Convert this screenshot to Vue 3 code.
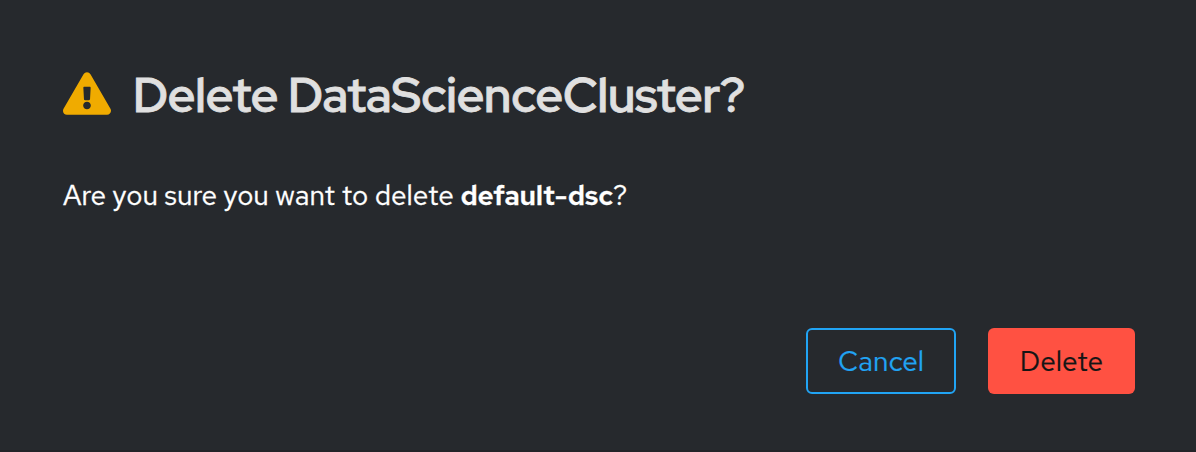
<script setup>
const title = 'Delete DataScienceCluster?'
const resource = 'default-dsc'
</script>

<template>
  <section class="modal" role="dialog" aria-labelledby="modal-title">
    <header class="header">
      <svg class="warning" viewBox="0 0 576 512" aria-hidden="true">
        <path fill="currentColor" d="M569.5 440C588 472 564.8 512 527.900 512H48.100C11.100 512-12 472 6.500 440L246.400 24C264.900-8 311.100-8 329.600 24L569.500 440zM288 354c-25.400 0-46 20.600-46 46s20.600 46 46 46 46-20.600 46-46-20.600-46-46-46zM244.300 188.700l7.400 136c.4 6.400 5.600 11.300 12 11.300h48.600c6.400 0 11.600-4.900 12-11.300l7.400-136c.4-6.900-5.100-12.700-12-12.700h-63.400c-6.900 0-12.400 5.800-12 12.700z" />
      </svg>
      <h1 id="modal-title" class="title">{{ title }}</h1>
    </header>
    <p class="message">Are you sure you want to delete <strong>{{ resource }}</strong>?</p>
    <footer class="footer">
      <button class="btn cancel" type="button">Cancel</button>
      <button class="btn delete" type="button">Delete</button>
    </footer>
  </section>
</template>

<style>
body {
  background: #26292d;
}
</style>

<style scoped>
.modal {
  box-sizing: border-box;
  width: 1196px;
  height: 452px;
  padding: 62px 61px 56px 63px;
  display: flex;
  flex-direction: column;
  background: #26292d;
  border-bottom: 2px solid #232328;
  font-family: "Red Hat Text", Lato, sans-serif;
  color: #fff;
}
.header {
  display: flex;
  align-items: center;
  height: 62px;
  gap: 22px;
}
.warning {
  width: 48px;
  height: 43px;
  margin-top: 1px;
  color: #f0ab00;
}
.title {
  margin: 0;
  padding-top: 4px;
  font-family: "Red Hat Display", "Red Hat Text", Lato, sans-serif;
  font-size: 48px;
  line-height: 62px;
  font-weight: 600;
  letter-spacing: -0.07px;
  color: #e0e0e0;
  -webkit-text-stroke: 0.8px #e0e0e0;
  white-space: nowrap;
}
.message {
  margin: 50px 0 0;
  font-size: 28px;
  line-height: 42px;
  white-space: nowrap;
  -webkit-text-stroke: 0.3px currentColor;
}
.message strong {
  font-weight: 600;
  letter-spacing: -0.2px;
}
.footer {
  display: flex;
  justify-content: flex-end;
  gap: 32px;
  margin-top: auto;
}
.btn {
  box-sizing: border-box;
  height: 66px;
  padding: 0;
  border: 0;
  border-radius: 6px;
  font: 400 28px/42px "Red Hat Text", Lato, sans-serif;
  -webkit-text-stroke: 0.2px currentColor;
}
.cancel {
  width: 150px;
  border: 2px solid #21a4f4;
  background: transparent;
  color: #21a4f4;
}
.delete {
  width: 147px;
  background: #ff5142;
  color: #151515;
}
</style>
